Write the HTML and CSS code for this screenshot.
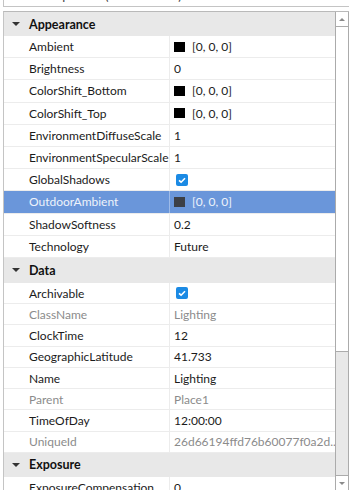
FILE: index.html
```html
<!DOCTYPE html>
<html lang="en">
<head>
    <meta charset="UTF-8">
    <meta name="viewport" content="width=device-width, initial-scale=1.0">
    <title>Properties - Lighting</title>
    <link rel="stylesheet" href="styles.css">
</head>
<body>
    <div class="filter">Filter Properties (Ctrl+Shift+P)</div>

    <div class="panel">
        <div class="list">
            <!-- Appearance -->
            <div class="section-head"><span class="caret"></span>Appearance</div>
            <div class="section">
                <div class="row"><div class="name">Ambient</div><div class="value"><span class="swatch"></span>[0, 0, 0]</div></div>
                <div class="row"><div class="name">Brightness</div><div class="value">0</div></div>
                <div class="row"><div class="name">ColorShift_Bottom</div><div class="value"><span class="swatch"></span>[0, 0, 0]</div></div>
                <div class="row"><div class="name">ColorShift_Top</div><div class="value"><span class="swatch"></span>[0, 0, 0]</div></div>
                <div class="row"><div class="name">EnvironmentDiffuseScale</div><div class="value">1</div></div>
                <div class="row"><div class="name">EnvironmentSpecularScale</div><div class="value">1</div></div>
                <div class="row"><div class="name">GlobalShadows</div><div class="value"><span class="check"><svg width="12" height="12" viewBox="0 0 12 12"><rect width="12" height="12" rx="2" fill="#1b8ae4"/><path d="M3 6.3 L5.1 8.2 L9 4.2" fill="none" stroke="#fff" stroke-width="1.6"/></svg></span></div></div>
                <div class="row selected"><div class="name">OutdoorAmbient</div><div class="value"><span class="swatch"></span>[0, 0, 0]</div></div>
                <div class="row"><div class="name">ShadowSoftness</div><div class="value">0.2</div></div>
                <div class="row"><div class="name">Technology</div><div class="value">Future</div></div>
            </div>

            <!-- Data -->
            <div class="section-head section-head-data"><span class="caret"></span>Data</div>
            <div class="section section-data">
                <div class="row"><div class="name">Archivable</div><div class="value"><span class="check"><svg width="12" height="12" viewBox="0 0 12 12"><rect width="12" height="12" rx="2" fill="#1b8ae4"/><path d="M3 6.3 L5.1 8.2 L9 4.2" fill="none" stroke="#fff" stroke-width="1.6"/></svg></span></div></div>
                <div class="row readonly"><div class="name">ClassName</div><div class="value">Lighting</div></div>
                <div class="row"><div class="name">ClockTime</div><div class="value">12</div></div>
                <div class="row"><div class="name">GeographicLatitude</div><div class="value">41.733</div></div>
                <div class="row"><div class="name">Name</div><div class="value">Lighting</div></div>
                <div class="row readonly"><div class="name">Parent</div><div class="value">Place1</div></div>
                <div class="row"><div class="name">TimeOfDay</div><div class="value">12:00:00</div></div>
                <div class="row readonly"><div class="name">UniqueId</div><div class="value">26d66194ffd76b60077f0a2d...</div></div>
            </div>

            <!-- Exposure -->
            <div class="section-head"><span class="caret"></span>Exposure</div>
            <div class="section">
                <div class="row"><div class="name">ExposureCompensation</div><div class="value">0</div></div>
            </div>
        </div>

        <div class="scrollbar">
            <div class="sb-up"><span class="arrow-up"></span></div>
            <div class="sb-thumb"></div>
            <div class="sb-track"></div>
            <div class="sb-down"><span class="arrow-down"></span></div>
        </div>
    </div>
</body>
</html>
```

FILE: styles.css
```css
body {
    margin: 0;
    width: 349px;
    height: 490px;
    overflow: hidden;
    font-family: Lato, 'Noto Sans', sans-serif;
    font-size: 12px;
    color: #1b1b1b;
    background-color: #fff;
}

/* search box, scrolled mostly out of view */
.filter {
    margin: -16px 0 0 3px;
    height: 22px;
    line-height: 23px;
    padding-left: 6px;
    border-left: 1px solid #c4c4c4;
    border-bottom: 1px solid #c4c4c4;
    font-size: 13px;
    color: #444;
}

.panel {
    display: flex;
    height: 478px;
    margin: 4px 0 0 3px;
    border-top: 1px solid #b9b9b9;
    border-left: 1px solid #c4c4c4;
    overflow: hidden;
}

.list {
    flex: 1;
    min-width: 0;
}

.section-head {
    display: flex;
    align-items: center;
    height: 24px;
    background-color: #e8e8e8;
    font-weight: bold;
    font-size: 12.5px;
    color: #111;
}

.section-head-data {
    height: 25px;
}

.caret {
    width: 0;
    height: 0;
    margin: 0 9px 0 8px;
    border-left: 4px solid transparent;
    border-right: 4px solid transparent;
    border-top: 4px solid #333;
}

.row {
    display: flex;
    height: 22.2px;
    box-sizing: border-box;
    border-bottom: 1px solid #ececec;
}

.section-data .row {
    height: 21.25px;
}

.name {
    width: 166px;
    box-sizing: border-box;
    padding-left: 25px;
    border-right: 1px solid #ececec;
    display: flex;
    align-items: center;
    white-space: nowrap;
    overflow: hidden;
}

.value {
    flex: 1;
    min-width: 0;
    padding-left: 4px;
    display: flex;
    align-items: center;
    white-space: nowrap;
    overflow: hidden;
}

.swatch {
    width: 11px;
    height: 10px;
    margin-right: 7px;
    background-color: #000;
}

.check {
    display: flex;
    margin-left: 2px;
}

.readonly {
    color: #8b8b8b;
}

.selected {
    background-color: #6a96da;
    color: #eef3fb;
}

.selected .name {
    border-right-color: #9ebbe8;
}

.selected .swatch {
    background-color: #3c3f46;
}

/* scrollbar */
.scrollbar {
    width: 12px;
    display: flex;
    flex-direction: column;
    border-left: 1px solid #ababab;
    border-right: 1px solid #ababab;
}

.sb-up, .sb-down {
    height: 14px;
    display: flex;
    align-items: center;
    justify-content: center;
    background-color: #fff;
}

.sb-up {
    border-bottom: 1px solid #ababab;
}

.sb-down {
    border-top: 1px solid #ababab;
}

.arrow-up, .arrow-down {
    width: 0;
    height: 0;
    border-left: 3px solid transparent;
    border-right: 3px solid transparent;
}

.arrow-up {
    border-bottom: 3px solid #8a8a8a;
}

.arrow-down {
    border-top: 3px solid #8a8a8a;
}

.sb-thumb {
    height: 324px;
    background-color: #fff;
    border-bottom: 1px solid #ababab;
}

.sb-track {
    flex: 1;
    background-color: #e8e8e8;
}
```
